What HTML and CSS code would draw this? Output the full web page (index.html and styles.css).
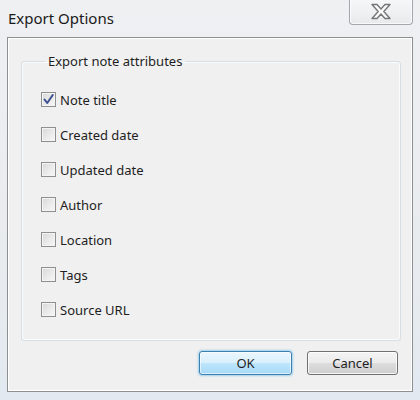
FILE: index.html
```html
<!DOCTYPE html>
<html>
<head>
<meta charset="utf-8">
<link rel="stylesheet" href="styles.css">
</head>
<body>
<div class="window">
  <div class="titlebar">
    <span class="title">Export Options</span>
    <button class="close" aria-label="Close">
      <svg width="24" height="17" viewBox="0 0 24 17">
        <path d="M3 1.5 L8 1.5 L12 6 L16 1.5 L21 1.5 L14.8 8.5 L21 15.5 L16 15.5 L12 11 L8 15.5 L3 15.5 L9.2 8.5 Z" fill="#fbfbfb" stroke="#767676" stroke-width="1.4" stroke-linejoin="round"/>
      </svg>
    </button>
  </div>
  <div class="panel">
    <fieldset class="group">
      <legend class="legend">Export note attributes</legend>
      <div class="rows">
        <label class="row"><span class="box checked"><svg width="13" height="13" viewBox="0 0 13 13"><path d="M2.5 6.5 L5.2 10 L10.8 2" fill="none" stroke="#3d4f8e" stroke-width="2" stroke-linecap="round" stroke-linejoin="round"/></svg></span>Note title</label>
        <label class="row"><span class="box"></span>Created date</label>
        <label class="row"><span class="box"></span>Updated date</label>
        <label class="row"><span class="box"></span>Author</label>
        <label class="row"><span class="box"></span>Location</label>
        <label class="row"><span class="box"></span>Tags</label>
        <label class="row"><span class="box"></span>Source URL</label>
      </div>
    </fieldset>
    <div class="actions">
      <button class="btn btn-default">OK</button>
      <button class="btn">Cancel</button>
    </div>
  </div>
</div>
</body>
</html>
```

FILE: styles.css
```css
* { box-sizing: border-box; }
html, body { margin: 0; padding: 0; }
body {
  width: 420px;
  height: 400px;
  overflow: hidden;
  font-family: "Noto Sans", "Open Sans", sans-serif;
  color: #1e1e1e;
}
.window {
  width: 420px;
  height: 400px;
  background: linear-gradient(180deg, #eef0f2 0%, #e9ecef 60%, #e2e9f0 100%);
  display: flex;
  flex-direction: column;
}
.titlebar {
  height: 37px;
  display: flex;
  justify-content: space-between;
  align-items: flex-start;
  padding: 0 7px 0 8px;
}
.title {
  font-size: 15px;
  line-height: 18px;
  margin-top: 9px;
  color: #1a1a1a;
}
.close {
  width: 64px;
  height: 26px;
  margin-top: -1px;
  border: 1px solid #a3a7ab;
  border-top: none;
  border-radius: 0 0 4px 4px;
  background: linear-gradient(180deg, #f6f7f8 0%, #e8eaec 100%);
  box-shadow: inset 0 0 0 1px rgba(255,255,255,0.7);
  display: flex;
  align-items: center;
  justify-content: center;
  padding: 0;
}
.panel {
  flex: 1;
  margin: 0 7px 8px 7px;
  background: #f0f0f0;
  border: 1px solid #8d8f91;
  box-shadow: inset 0 0 0 1px #ffffff;
  display: flex;
  flex-direction: column;
  padding: 15px 11px 15px 13px;
}
.group {
  margin: 0;
  border: 1px solid #d5dfe5;
  border-radius: 3px;
  box-shadow: inset 0 0 0 1px #fbfbfb;
  padding: 21px 0 22px 19px;
  min-width: 0;
}
.legend {
  font-size: 13px;
  line-height: 17px;
  padding: 0 3px;
  margin-left: 4px;
}
.rows {
  display: flex;
  flex-direction: column;
  gap: 18px;
}
.row {
  display: flex;
  align-items: center;
  gap: 4px;
  height: 17px;
  font-size: 13px;
}
.box {
  width: 15px;
  height: 15px;
  border: 1px solid #8e8f8f;
  background: linear-gradient(135deg, #d8d8d8 0%, #ececec 60%, #f7f7f7 100%);
  box-shadow: inset 0 0 0 1px #f4f4f4;
  display: flex;
  align-items: center;
  justify-content: center;
  flex: none;
}
.actions {
  margin-top: auto;
  display: flex;
  justify-content: flex-end;
  gap: 15px;
  padding-right: 3px;
  padding-bottom: 1px;
}
.btn {
  width: 91px;
  height: 24px;
  font-family: inherit;
  font-size: 13px;
  color: #1e1e1e;
  border: 1px solid #707070;
  border-radius: 3px;
  background: linear-gradient(180deg, #f4f4f4 0%, #ebebeb 50%, #dddddd 51%, #cfcfcf 100%);
  box-shadow: inset 0 0 0 1px rgba(255,255,255,0.8);
  padding: 0;
}
.btn-default {
  width: 93px;
  border-color: #3c7fb1;
  background: linear-gradient(180deg, #eaf6fd 0%, #d9f0fc 50%, #bee6fd 51%, #a7d9f5 100%);
  box-shadow: inset 0 0 0 1px rgba(255,255,255,0.6), 0 0 2px 1px rgba(94,182,230,0.55);
}
```
